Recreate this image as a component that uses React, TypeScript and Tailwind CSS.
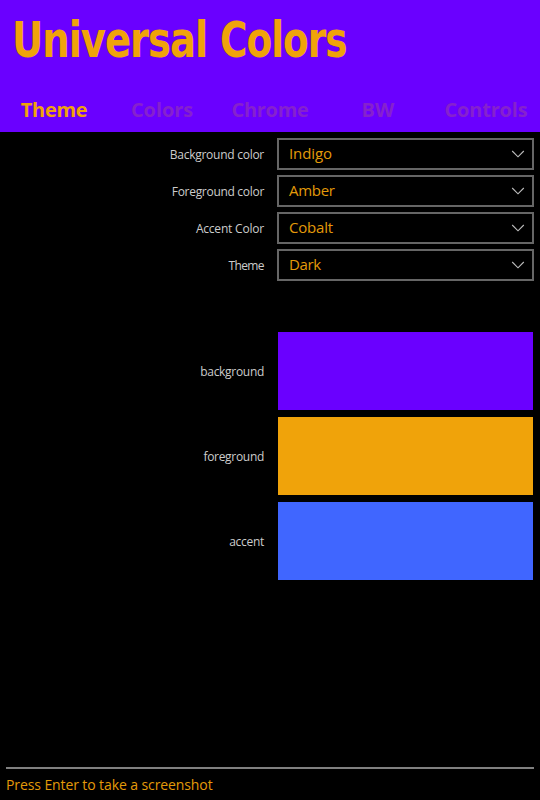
type LabeledItem = { label: string; value: string; labelClass: string; valueClass: string };

const tabs = [
  { name: "Theme", style: "text-[#f0a30a] tracking-[-0.3px]" },
  { name: "Colors", style: "text-[#8521ce] tracking-[-0.1px]" },
  { name: "Chrome", style: "text-[#8521ce] tracking-[-0.3px]" },
  { name: "BW", style: "text-[#8521ce] tracking-[0.1px]" },
  { name: "Controls", style: "text-[#8521ce] tracking-[-0.2px]" },
];

const settings: LabeledItem[] = [
  { label: "Background color", value: "Indigo", labelClass: "tracking-[-0.26px]", valueClass: "tracking-[-0.1px]" },
  { label: "Foreground color", value: "Amber", labelClass: "tracking-[-0.3px]", valueClass: "tracking-[-0.3px]" },
  { label: "Accent Color", value: "Cobalt", labelClass: "tracking-[-0.2px]", valueClass: "tracking-[-0.2px]" },
  { label: "Theme", value: "Dark", labelClass: "tracking-[-0.6px]", valueClass: "tracking-[-0.4px]" },
];

const swatches = [
  { label: "background", color: "bg-[#6a00ff]" },
  { label: "foreground", color: "bg-[#f0a30a]" },
  { label: "accent", color: "bg-[#4066ff]" },
];

function Chevron() {
  return (
    <svg width="14" height="8" viewBox="0 0 14 8" fill="none" stroke="#bdbdbd" strokeWidth="1.1">
      <path d="M1.2 1 L7 6.8 L12.8 1" />
    </svg>
  );
}

export default function App() {
  return (
    <div className="flex h-[800px] w-[540px] flex-col overflow-hidden bg-black font-['Open_Sans','Noto_Sans',sans-serif]">
      <header className="flex h-[132px] flex-col bg-[#6a00ff]">
        <h1 className="flex h-[88px] whitespace-pre pl-[12px] pt-[11px] font-['DejaVu_Sans_Condensed','DejaVu_Sans',sans-serif] text-[49px] font-bold leading-[60px] tracking-[-1.2px] text-[#f0a30a]">
          <span className="w-[208px] origin-left scale-x-[0.875]">Universal </span>
          <span className="w-[140px] origin-left scale-x-[0.85]">Colors</span>
        </h1>
        <nav className="grid h-[44px] grid-cols-5">
          {tabs.map((tab) => (
            <button key={tab.name} className={`text-center text-[20px] font-bold leading-[44px] ${tab.style}`}>
              {tab.name}
            </button>
          ))}
        </nav>
      </header>

      <main className="flex flex-1 flex-col pr-[6px] pt-[6px]">
        <div className="flex flex-col gap-[5px]">
          {settings.map((item) => (
            <div key={item.label} className="flex h-8 items-center">
              <span className={`w-[264px] pt-px text-right text-[12px] text-[#cccccc] ${item.labelClass}`}>{item.label}</span>
              <button className="ml-[13px] flex h-8 w-[257px] items-center justify-between border-2 border-[#666666] pl-[10px] pr-[7px] text-[#e39a09]">
                <span className={`pb-[2px] text-[15px] leading-[26px] ${item.valueClass}`}>{item.value}</span>
                <Chevron />
              </button>
            </div>
          ))}
        </div>
        <div className="mt-[51px] flex flex-col gap-[7px]">
          {swatches.map((item) => (
            <div key={item.label} className="flex h-[78px] items-center">
              <span className="w-[264px] pt-px text-right text-[12px] tracking-[-0.3px] text-[#cccccc]">{item.label}</span>
              <div className={`ml-[14px] h-[78px] w-[255px] ${item.color}`} />
            </div>
          ))}
        </div>
      </main>

      <footer className="mx-[6px] h-[33px] border-t-2 border-[#808080] text-[14px] leading-[31px] tracking-[-0.1px] text-[#e39a09]">
        Press Enter to take a screenshot
      </footer>
    </div>
  );
}
